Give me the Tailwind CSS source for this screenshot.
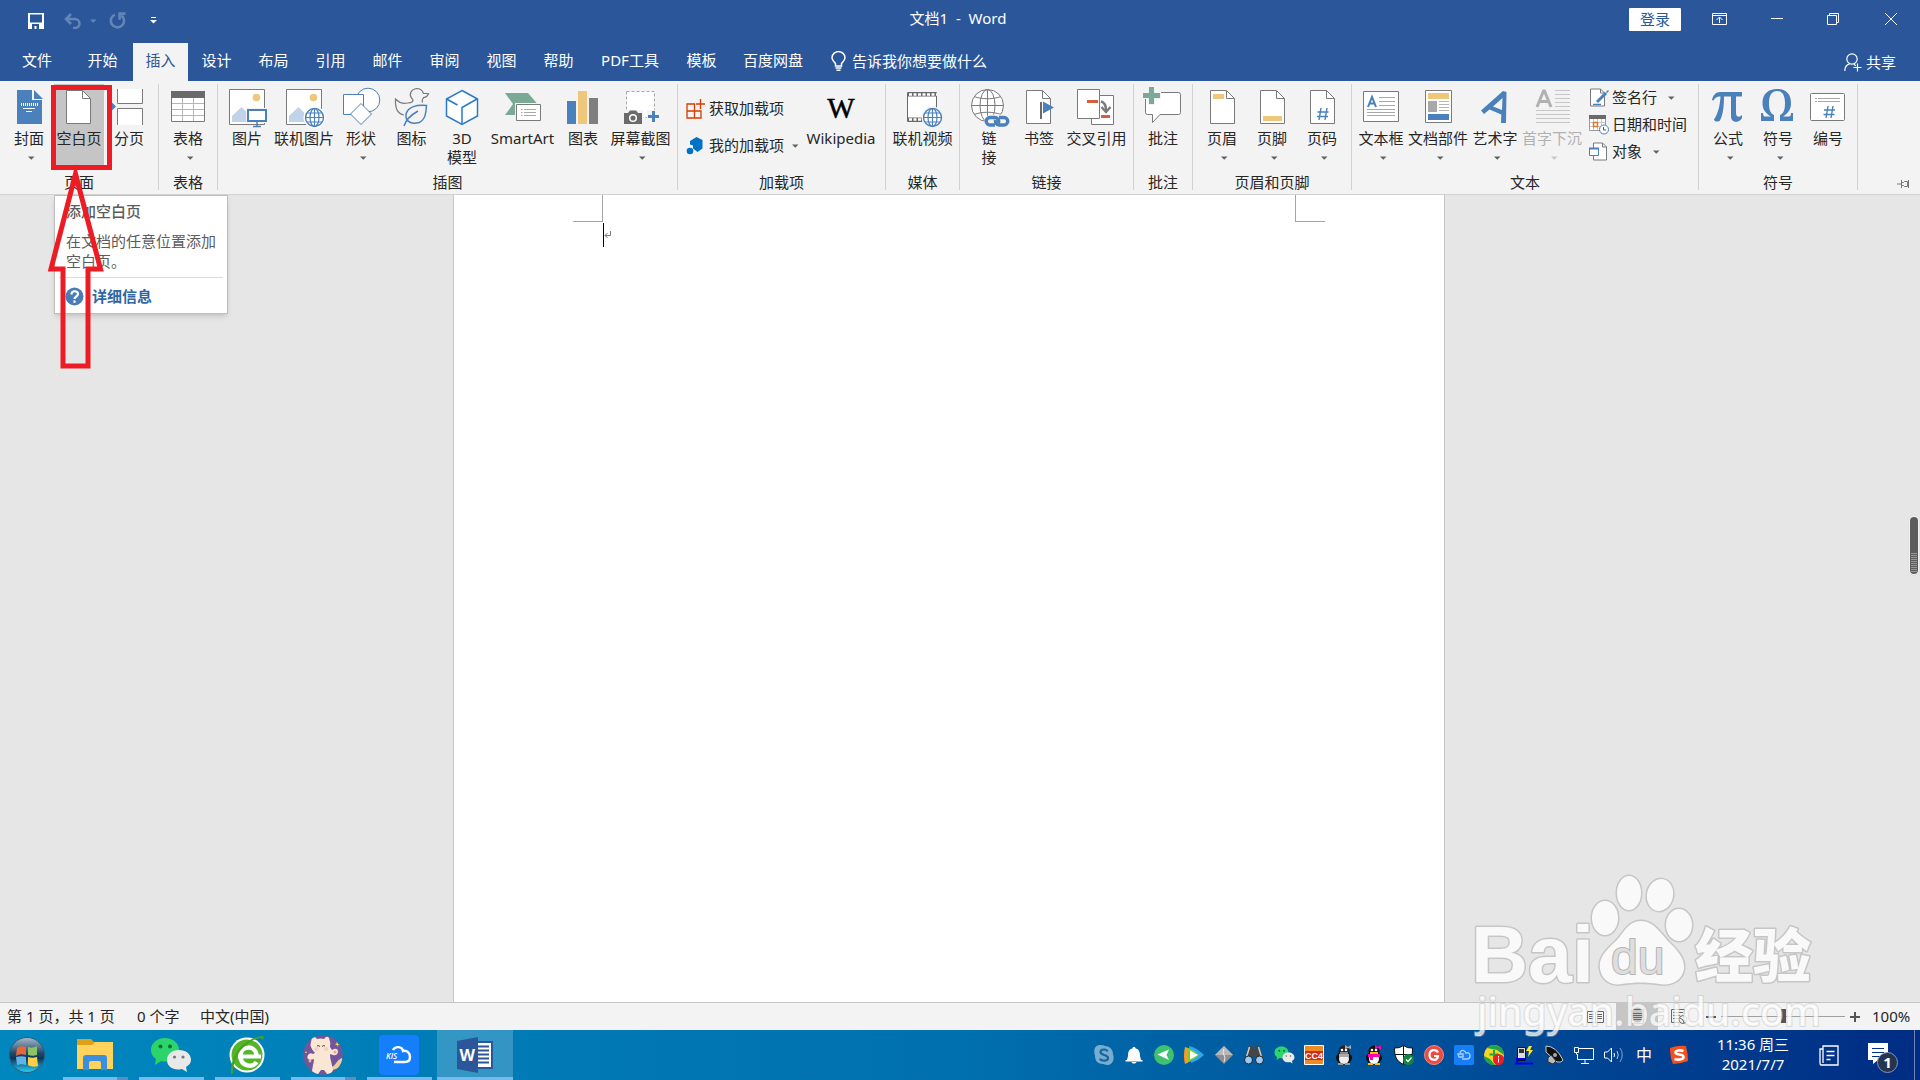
<!DOCTYPE html>
<html lang="zh-CN">
<head>
  <meta charset="UTF-8">
  <meta name="viewport" content="width=device-width, initial-scale=1.0">
  <title>文档1 - Word</title>
  <script src="https://cdn.jsdelivr.net/npm/@tailwindcss/browser@4"></script>
</head>
<body class="relative flex flex-col h-screen overflow-hidden bg-[#e6e6e6] text-[#262626] text-[15px] leading-[19px] font-['Noto_Sans','Noto_Sans_CJK_SC',sans-serif]">

  <!-- Símbolos reutilizados -->
  <svg width="0" height="0" class="absolute" aria-hidden="true">
    <symbol id="doc" viewBox="0 0 50 42">
      <path d="M13.500 4.500h16l8 8v25h-24z" fill="#fff" stroke="#7a7a7a"/>
      <path d="M29.500 4.500v8h8" fill="none" stroke="#7a7a7a"/>
    </symbol>
    <symbol id="globe" viewBox="0 0 20 20">
      <circle cx="10" cy="10" r="9" fill="#fff" stroke="#4a80bb" stroke-width="1.400"/>
      <path d="M10 1v18M1 10h18M2.500 5.500h15M2.500 14.500h15" stroke="#4a80bb" stroke-width="1.200"/>
      <ellipse cx="10" cy="10" rx="4.500" ry="9" fill="none" stroke="#4a80bb" stroke-width="1.200"/>
    </symbol>
    <symbol id="caret" viewBox="0 0 7 4"><path d="M0 .5h6.500L3.250 3.800z" fill="currentColor"/></symbol>
    <symbol id="wechat" viewBox="0 0 42 36">
      <path d="M15 1C7 1 1 6 1 13c0 4 2 7 5 9l-1 6 6-4c9 2 18-2 18-11C29 6 23 1 15 1z" fill="#2bd56a"/>
      <circle cx="10.500" cy="9.500" r="2" fill="#116b3a"/><circle cx="20" cy="9.500" r="2" fill="#116b3a"/>
      <path d="M29 13c-7 0-12 4-12 10 0 7 7 11 15 9l5 3-1-5c3-2 5-4 5-7 0-6-5-10-12-10z" fill="#e9e9e9"/>
      <circle cx="24.500" cy="20" r="1.600" fill="#777"/><circle cx="33" cy="20" r="1.600" fill="#777"/>
    </symbol>
  </svg>

  <!-- Barra de título -->
  <header class="bg-[#2b579a] text-white shrink-0">
    <div class="h-[43px] grid grid-cols-[1fr_auto_1fr]">
      <div class="flex items-center pl-7 pb-0.5">
        <button aria-label="保存">
          <svg width="16" height="16" viewBox="0 0 16 16"><path d="M0 0h16v16H0z" fill="#fff"/><path d="M2 1.500h12v8H2zM4 11h7v5H8.500v-3H6.500v3H4z" fill="#2b579a"/></svg>
        </button>
        <button aria-label="撤消" class="ml-5 flex items-center gap-2 text-[#6485b7]">
          <svg width="18" height="16" viewBox="0 0 18 16" fill="none" stroke="currentColor" stroke-width="2.600"><path d="M7 1L2 6l5 5M2.500 6H11a4.500 4.500 0 0 1 0 9H9"/></svg>
          <svg width="7" height="4"><use href="#caret"/></svg>
        </button>
        <button aria-label="恢复" class="ml-3">
          <svg width="17" height="17" viewBox="0 0 17 17" fill="none" stroke="#6485b7" stroke-width="2.600"><path d="M6 2.600A6.600 6.600 0 1 0 12.500 3.500"/><path d="M16.500 1.600H10.600v6.200"/></svg>
        </button>
        <button aria-label="自定义快速访问工具栏" class="ml-6">
          <svg width="7" height="7" viewBox="0 0 7 7"><path d="M1 .5h5" stroke="#fff"/><path d="M0 3h7L3.500 6.500z" fill="#fff"/></svg>
        </button>
      </div>
      <h1 class="pt-[9px] pr-1 whitespace-pre">文档1  -  Word</h1>
      <div class="flex justify-end items-start">
        <button class="mt-2 w-[52px] h-[23px] bg-white text-[#2b579a] rounded-[1px]">登录</button>
        <button aria-label="功能区显示选项" class="w-[76px] h-[38px] flex justify-center items-center"><svg width="15" height="12" viewBox="0 0 15 12" fill="none" stroke="#fff"><path d="M.5.5h14v11H.5zM.5 2.500h14M7.500 10V4.500M4.500 7l3-3 3 3"/></svg></button>
        <button aria-label="最小化" class="w-10 h-[38px] flex justify-center items-center"><svg width="12" height="2"><path d="M0 .5h12" stroke="#fff"/></svg></button>
        <button aria-label="向下还原" class="w-[72px] h-[38px] flex justify-center items-center"><svg width="12" height="12" viewBox="0 0 12 12" fill="none" stroke="#fff"><path d="M.5 2.500h9v9h-9zM2.500 2.500v-2h9v9h-2"/></svg></button>
        <button aria-label="关闭" class="w-[51px] h-[38px] flex pl-4 items-center"><svg width="12" height="12" viewBox="0 0 12 12" stroke="#fff"><path d="M0 0l12 12M12 0L0 12"/></svg></button>
      </div>
    </div>
    <nav class="h-[38px] flex items-stretch">
      <button class="w-[74px] pb-1">文件</button>
      <button class="w-[57px] pb-1">开始</button>
      <button class="w-[55px] ml-0.5 pb-1 bg-[#f3f3f3] text-[#2b579a]">插入</button>
      <button class="w-[57px] pb-1">设计</button>
      <button class="w-[57px] pb-1">布局</button>
      <button class="w-[57px] pb-1">引用</button>
      <button class="w-[57px] pb-1">邮件</button>
      <button class="w-[57px] pb-1">审阅</button>
      <button class="w-[57px] pb-1">视图</button>
      <button class="w-[57px] pb-1">帮助</button>
      <button class="w-[86px] pb-1">PDF工具</button>
      <button class="w-[57px] pb-1">模板</button>
      <button class="w-[86px] pb-1">百度网盘</button>
      <label for="tellMe" class="flex items-center pl-[15px] pb-0.5" aria-label="告诉我你想要做什么">
        <svg width="15" height="20" viewBox="0 0 15 20" fill="none" stroke="#fff" stroke-width="1.500"><path d="M4.500 15v-2.500C3 11 1 9.500 1 6.800a6.500 6.200 0 0 1 13 0c0 2.700-2 4.200-3.500 5.700V15zM4.500 17h6M5.500 19.200h4"/></svg>
      </label>
      <input id="tellMe" type="text" placeholder="告诉我你想要做什么" class="w-40 ml-1.5 pb-0.5 bg-transparent outline-none placeholder:text-white">
      <button class="ml-auto mr-6 flex items-center gap-1">
        <svg width="18" height="19" viewBox="0 0 18 19" fill="none" stroke="#fff" stroke-width="1.200"><circle cx="8" cy="6" r="5.200"/><path d="M.8 18c0-4 2-6.500 5-7.200M9.800 11.200l2 1.500M13.500 10.500v8M9.500 14.500h8"/></svg>
        共享
      </button>
    </nav>
  </header>

  <!-- Faixa de opções -->
  <section class="relative h-[114px] shrink-0 bg-[#f3f3f3] border-b border-[#d2d2d2] flex items-start pt-[3px] text-center">
    <div class="h-[106px] px-1 border-r border-[#d2d2d2] flex flex-col justify-between">
      <div class="flex">
        <button class="w-[50px] h-[82px] flex flex-col items-center">
          <svg width="50" height="45" viewBox="0 -2 50 45" class="shrink-0"><path d="M13 4h15v10h10v24H13z" fill="#4a80bb"/><path d="M30 4l9 9h-9z" fill="#4a80bb"/><path d="M17 18.500h17" stroke="#fff" stroke-width="3" stroke-dasharray="1 1"/><path d="M19 22.500h12M22 25.500h6" stroke="#fff"/></svg>
          封面
          <svg width="7" height="4" class="mt-2 ml-1 text-[#606060]"><use href="#caret"/></svg>
        </button>
        <button class="w-[50px] h-[82px] flex flex-col items-center bg-[#c5c5c5]">
          <svg width="50" height="45" viewBox="1 -2 50 45" class="shrink-0"><use href="#doc" width="50" height="42"/></svg>
          空白页
        </button>
        <button class="w-[50px] h-[82px] flex flex-col items-center">
          <svg width="50" height="45" viewBox="0 -2 50 45" class="shrink-0"><path d="M13.500 3v14.500h25V3M13.500 39V22.500h25V39" fill="#fff" stroke="#7a7a7a"/><path d="M4 18.500h4v-2l4 4-4 4v-2H4z" fill="#4a80bb"/></svg>
          分页
        </button>
      </div>
      <p class="-mb-0.5">页面</p>
    </div>

    <div class="h-[106px] px-1 border-r border-[#d2d2d2] flex flex-col justify-between">
      <button class="w-[50px] h-[82px] flex flex-col items-center">
        <svg width="50" height="45" viewBox="0 -2 50 45" class="shrink-0"><path d="M8.500 5.500h33v30h-33z" fill="#fff" stroke="#7a7a7a"/><path d="M8 5h34v7H8z" fill="#6a6a6a"/><path d="M19.500 12v23M30.500 12v23M9 17.500h32M9 23.500h32M9 29.500h32" stroke="#b5b5b5"/></svg>
        表格
        <svg width="7" height="4" class="mt-2 ml-1 text-[#606060]"><use href="#caret"/></svg>
      </button>
      <p class="-mb-0.5">表格</p>
    </div>

    <div class="h-[106px] px-1 border-r border-[#d2d2d2] flex flex-col justify-between">
      <div class="flex">
        <button class="w-[50px] h-[82px] flex flex-col items-center">
          <svg width="50" height="45" viewBox="0 -2 50 45" class="shrink-0"><path d="M7.500 3.500h35v35h-35z" fill="#fff" stroke="#7a7a7a"/><circle cx="34.500" cy="11.500" r="3.800" fill="#eec77c"/><path d="M10 36v-6l9.500-9 5 5v10z" fill="#c1d3e8"/><path d="M24 22h22v15H24z" fill="#f3f3f3"/><path d="M26 24h18v11H26z" fill="#fff" stroke="#4a80bb" stroke-width="2"/><path d="M31 40.500h8M35 36v4" stroke="#4a80bb" stroke-width="1.500"/></svg>
          图片
        </button>
        <button class="w-16 h-[82px] flex flex-col items-center">
          <svg width="64" height="45" viewBox="0 -2 64 45" class="shrink-0"><path d="M14.500 3.500h35v35h-35z" fill="#fff" stroke="#7a7a7a"/><circle cx="41.500" cy="11.500" r="3.800" fill="#eec77c"/><path d="M17 36v-6l9.500-9 8 8v7z" fill="#c1d3e8"/><circle cx="42.500" cy="31.500" r="11" fill="#fff"/><use href="#globe" x="32.500" y="21.500" width="20" height="20"/></svg>
          联机图片
        </button>
        <button class="w-[50px] h-[82px] flex flex-col items-center">
          <svg width="50" height="45" viewBox="0 -2 50 45" class="shrink-0" fill="#fff" stroke="#4a80bb"><circle cx="32" cy="14" r="11.800"/><path d="M7.500 8.500h20v20h-20z"/><path d="M25 17.500L35.500 28 25 38.500 14.500 28z"/></svg>
          形状
          <svg width="7" height="4" class="mt-2 ml-1 text-[#606060]"><use href="#caret"/></svg>
        </button>
        <button class="w-[51px] h-[82px] flex flex-col items-center">
          <svg width="50" height="45" viewBox="0 -2 50 45" class="shrink-0" fill="none"><path d="M17 29C11 28 8 22 8.500 13c4 4 8 5 12 4 5 0 7-2 4-5-3-4 0-9 5-9.500 4 0 6 2 7 5h5c-1 3-3 4-5 4-1 2-2 3-1 5M16 29" stroke="#7a7a7a" stroke-width="1.200"/><path d="M39.500 19.500c-9-1-19 1-20.500 9-1 8 7 10 13 8 7-3 7-11 7.500-17zM17 40c2-7 7-11 14-15" stroke="#4a80bb" stroke-width="1.500" fill="#f3f3f3"/></svg>
          图标
        </button>
        <button class="w-[50px] h-[82px] flex flex-col items-center">
          <svg width="50" height="45" viewBox="0 -2 50 45" class="shrink-0" fill="#fff" stroke="#2a7ac8" stroke-width="1.500"><path d="M25 4.500l15.500 8.500v17L25 38.500 9.500 30V13z"/><path d="M25 38V21.500L40 13M9.500 13l11 6"/></svg>
          3D<br>模型
        </button>
        <button class="w-[71px] h-[82px] flex flex-col items-center">
          <svg width="72" height="45" viewBox="0 -2 72 45" class="shrink-0"><path d="M18 7h23l9.500 11L41 29H18l8-11z" fill="#7aa996"/><path d="M28 17h27v20H28z" fill="#f3f3f3"/><path d="M29.500 18.500h24v16h-24z" fill="#fff" stroke="#7a7a7a"/><path d="M34 23.500h1.500M37 23.500h12M34 26.500h1.500M37 26.500h12M34 29.500h1.500M37 29.500h12" stroke="#a8a8a8"/></svg>
          SmartArt
        </button>
        <button class="w-[50px] h-[82px] flex flex-col items-center">
          <svg width="50" height="45" viewBox="0 -2 50 45" class="shrink-0"><path d="M9 15h9v23H9z" fill="#4a80bb"/><path d="M20 5h9v33h-9z" fill="#eec77c"/><path d="M31 12h9v26h-9z" fill="#7f7f7f"/></svg>
          图表
        </button>
        <button class="w-[65px] h-[82px] flex flex-col items-center">
          <svg width="64" height="45" viewBox="0 -2 64 45" class="shrink-0"><path d="M17.500 5.500h28v26h-28z" fill="#fff" stroke="#a8a8a8" stroke-dasharray="3 2"/><path d="M14 24h20v15H14zM38 24h14v14H38z" fill="#f3f3f3"/><path d="M15 27h4l2-2.500h6l2 2.500h4v11H15z" fill="#6a6a6a"/><circle cx="24" cy="32" r="3.300" fill="none" stroke="#fff" stroke-width="1.500"/><path d="M44.500 25v11M39 30.500h11" stroke="#4a80bb" stroke-width="3"/></svg>
          屏幕截图
          <svg width="7" height="4" class="mt-2 ml-1 text-[#606060]"><use href="#caret"/></svg>
        </button>
      </div>
      <p class="-mb-0.5">插图</p>
    </div>

    <div class="h-[106px] px-1 border-r border-[#d2d2d2] flex flex-col justify-between">
      <div class="flex">
        <div class="w-[119px] pl-1 pt-1.5 flex flex-col">
          <button class="h-[37px] flex items-center gap-1 whitespace-nowrap">
            <svg width="19" height="20" viewBox="0 0 19 20" fill="none" stroke="#d83b01" stroke-width="1.300" class="shrink-0"><path d="M1 5h7.500v14H1zM1 12h14v7H1M8.500 12h6.500M14.500 0v10M10 5h9M1 5h7"/></svg>
            获取加载项
          </button>
          <button class="h-[37px] flex items-center gap-1 whitespace-nowrap">
            <svg width="19" height="18" viewBox="0 0 19 18" fill="#0072c6" class="shrink-0"><path d="M10.500 0l6 3v8.500l-5 3.500-4.500-3.500v-3l-3-1V4z"/><circle cx="4" cy="14" r="3.300"/></svg>
            我的加载项
            <svg width="7" height="4" class="ml-1 shrink-0 text-[#606060]"><use href="#caret"/></svg>
          </button>
        </div>
        <button class="w-20 h-[82px] flex flex-col items-center">
          <span class="h-[45px] pt-[6px] text-[29px] leading-9 text-black [-webkit-text-stroke:0.5px_#000] font-['Liberation_Serif',serif]">W</span>
          Wikipedia
        </button>
      </div>
      <p class="-mb-0.5">加载项</p>
    </div>

    <div class="h-[106px] px-1 border-r border-[#d2d2d2] flex flex-col justify-between">
      <button class="w-[65px] h-[82px] flex flex-col items-center">
        <svg width="65" height="45" viewBox="0 -2 65 45" class="shrink-0"><path d="M17.500 6.500h29v29h-29z" fill="#fff" stroke="#6a6a6a"/><path d="M18 8.500h28M18 33.500h14" stroke="#6a6a6a" stroke-width="4"/><path d="M19 8.500h28M19 33.500h13" stroke="#fff" stroke-width="2.400" stroke-dasharray="3 1.500"/><circle cx="42.500" cy="31.500" r="11" fill="#f3f3f3"/><use href="#globe" x="32.500" y="21.500" width="20" height="20"/></svg>
        联机视频
      </button>
      <p class="-mb-0.5">媒体</p>
    </div>

    <div class="h-[106px] px-1 border-r border-[#d2d2d2] flex flex-col justify-between">
      <div class="flex">
        <button class="w-[50px] h-[82px] flex flex-col items-center">
          <svg width="50" height="45" viewBox="0 -2 50 45" class="shrink-0" fill="none"><circle cx="23.500" cy="19.500" r="16" fill="#fff" stroke="#7a7a7a"/><ellipse cx="23.500" cy="19.500" rx="7.500" ry="16" stroke="#7a7a7a"/><path d="M23.500 3.500v32M7.500 19.500h32M10 10.500c8 3 19 3 27 0M10 28.500c8-3 19-3 27 0" stroke="#7a7a7a"/><g stroke="#f3f3f3" stroke-width="7"><rect x="24" y="32" width="11" height="7" rx="3.500"/><rect x="31" y="32" width="12" height="7" rx="3.500"/></g><g stroke="#4a80bb" stroke-width="3.400"><path d="M31 39h-5a3.500 3.500 0 0 1 0-7.500h5a4 4 0 0 1 3.500 5.500M35 31.500h5a3.500 3.500 0 0 1 0 7.500h-5a4 4 0 0 1-3.500-5"/></g></svg>
          链<br>接
        </button>
        <button class="w-[50px] h-[82px] flex flex-col items-center">
          <svg width="50" height="45" viewBox="1 -2 50 45" class="shrink-0"><use href="#doc" width="50" height="42"/><path d="M28 16v17" stroke="#6a6a6a" stroke-width="2"/><path d="M30 15.500l11 6-11 6z" fill="#4a80bb"/></svg>
          书签
        </button>
        <button class="w-[65px] h-[82px] flex flex-col items-center">
          <svg width="65" height="45" viewBox="0 -2 65 45" class="shrink-0"><path d="M27.500 9.500h22v29h-22z" fill="#fff" stroke="#7a7a7a"/><path d="M13.500 3.500h22v29h-22z" fill="#fff" stroke="#7a7a7a"/><path d="M23 15.500h11M37 30.500h9" stroke="#d65d3e" stroke-width="3"/><path d="M37 15.500c4 1 5 4 5 9M37.500 21l4.500 5 4.500-5" fill="none" stroke="#7a7a7a" stroke-width="2.400"/></svg>
          交叉引用
        </button>
      </div>
      <p class="-mb-0.5">链接</p>
    </div>

    <div class="h-[106px] px-1 border-r border-[#d2d2d2] flex flex-col justify-between">
      <button class="w-[50px] h-[82px] flex flex-col items-center">
        <svg width="50" height="45" viewBox="0 -2 50 45" class="shrink-0"><path d="M9.500 6.500h31q2 0 2 2v18q0 2-2 2H22l-7.500 8v-8h-5q-2 0-2-2v-18q0-2 2-2z" fill="#fff" stroke="#7a7a7a"/><path d="M13.500 0v19M4 9.500h19" stroke="#f3f3f3" stroke-width="7"/><path d="M13.500 1v17M5 9.500h17" stroke="#7aa996" stroke-width="5"/></svg>
        批注
      </button>
      <p class="-mb-0.5">批注</p>
    </div>

    <div class="h-[106px] px-1 border-r border-[#d2d2d2] flex flex-col justify-between">
      <div class="flex">
        <button class="w-[50px] h-[82px] flex flex-col items-center">
          <svg width="50" height="45" viewBox="0 -2 50 45" class="shrink-0"><use href="#doc" width="50" height="42"/><path d="M16 8h11v5H16z" fill="#eec77c"/></svg>
          页眉
          <svg width="7" height="4" class="mt-2 ml-1 text-[#606060]"><use href="#caret"/></svg>
        </button>
        <button class="w-[50px] h-[82px] flex flex-col items-center">
          <svg width="50" height="45" viewBox="0 -2 50 45" class="shrink-0"><use href="#doc" width="50" height="42"/><path d="M16 30h19v5H16z" fill="#eec77c"/></svg>
          页脚
          <svg width="7" height="4" class="mt-2 ml-1 text-[#606060]"><use href="#caret"/></svg>
        </button>
        <button class="w-[50px] h-[82px] flex flex-col items-center">
          <svg width="50" height="45" viewBox="0 -2 50 45" class="shrink-0"><use href="#doc" width="50" height="42"/><path d="M24 22l-2 12M30 22l-2 12M20.500 26h11M20 30.500h11" stroke="#4a80bb" stroke-width="1.400"/></svg>
          页码
          <svg width="7" height="4" class="mt-2 ml-1 text-[#606060]"><use href="#caret"/></svg>
        </button>
      </div>
      <p class="-mb-0.5">页眉和页脚</p>
    </div>

    <div class="h-[106px] px-1 border-r border-[#d2d2d2] flex flex-col justify-between">
      <div class="flex">
        <button class="w-[50px] h-[82px] flex flex-col items-center whitespace-nowrap">
          <svg width="50" height="45" viewBox="0 -2 50 45" class="shrink-0"><path d="M7.500 5.500h35v30h-35z" fill="#fff" stroke="#7a7a7a"/><path d="M12 21l4-10 4 10M13.500 17.500h5" fill="none" stroke="#4a80bb" stroke-width="2"/><path d="M23 11.500h16M23 15.500h16M23 19.500h16M11 23.500h28M11 26.500h28M11 29.500h28" stroke="#a8a8a8"/></svg>
          文本框
          <svg width="7" height="4" class="mt-2 ml-1 text-[#606060]"><use href="#caret"/></svg>
        </button>
        <button class="w-16 h-[82px] flex flex-col items-center whitespace-nowrap">
          <svg width="64" height="45" viewBox="0 -2 64 45" class="shrink-0"><path d="M19.500 4.500h26v32h-26z" fill="#fff" stroke="#7a7a7a"/><path d="M22 7h21v6H22z" fill="#eec77c"/><path d="M22 15h9v11h-9z" fill="#a8a8a8"/><path d="M33 15.500h10M33 18.500h10M33 21.500h10M33 24.500h10" stroke="#b5b5b5"/><path d="M22 28h21v6H22z" fill="#4a80bb"/></svg>
          文档部件
          <svg width="7" height="4" class="mt-2 ml-1 text-[#606060]"><use href="#caret"/></svg>
        </button>
        <button class="w-[50px] h-[82px] flex flex-col items-center whitespace-nowrap">
          <svg width="50" height="45" viewBox="0 -2 50 45" class="shrink-0"><path d="M11 24.500L33 5l3.500 1L36 37h-5l.300-8.500L19.500 23.500 14 28zM23 20.500l9 3.500.500-12z" fill="#4a80bb"/></svg>
          艺术字
          <svg width="7" height="4" class="mt-2 ml-1 text-[#606060]"><use href="#caret"/></svg>
        </button>
        <button class="w-16 h-[82px] flex flex-col items-center whitespace-nowrap text-[#b1b1b1]" disabled>
          <svg width="64" height="45" viewBox="0 -2 64 45" class="shrink-0"><path d="M17 21l6.500-16h1L31 21M19.500 15.500h9" fill="none" stroke="#b1b1b1" stroke-width="3"/><path d="M35 4.500h15M35 8.500h15M35 12.500h15M35 16.500h15M35 20.500h15M16 24.500h34M16 28.500h34M16 32.500h34M16 36.500h34" stroke="#c6c6c6"/></svg>
          首字下沉
          <svg width="7" height="4" class="mt-2 ml-1 text-[#c6c6c6]"><use href="#caret"/></svg>
        </button>
        <div class="w-[110px] pl-[5px] flex flex-col">
          <button class="h-[27px] flex items-center gap-[3px] whitespace-nowrap">
            <svg width="20" height="19" viewBox="0 0 20 19" class="shrink-0"><path d="M1.500 1h10l4 4v13h-14z" fill="#fff" stroke="#7a7a7a"/><path d="M11.500 1v4h4" fill="none" stroke="#7a7a7a"/><path d="M8 14L17 5" stroke="#4a80bb" stroke-width="3"/><path d="M17.500 4.500L19.500 2.500M4 16.500h8" stroke="#4a80bb" stroke-width="1.500"/></svg>
            签名行
            <svg width="7" height="4" class="ml-2 shrink-0 text-[#606060]"><use href="#caret"/></svg>
          </button>
          <button class="h-[27px] flex items-center gap-[3px] whitespace-nowrap">
            <svg width="20" height="20" viewBox="0 0 20 20" class="shrink-0"><path d="M.5.500h16v15H.5z" fill="#fff" stroke="#9a9a9a"/><path d="M0 0h17v4H0z" fill="#6a6a6a"/><path d="M4.500 4v11M8.500 4v11M12.500 4v11M1 7.500h15M1 11.500h15" stroke="#c6c6c6"/><path d="M4.500 7.500h4v4h-4z" fill="#fff" stroke="#e07a28" stroke-width="1.500"/><circle cx="15" cy="14.500" r="4.500" fill="#fff" stroke="#4a80bb"/><path d="M14.500 12v3h2.500" fill="none" stroke="#555"/></svg>
            日期和时间
          </button>
          <button class="h-[27px] flex items-center gap-[3px] whitespace-nowrap">
            <svg width="20" height="19" viewBox="0 0 20 19" class="shrink-0"><path d="M4.500 1h9l4 4v13h-13z" fill="#fff" stroke="#7a7a7a"/><path d="M13.500 1v4h4" fill="none" stroke="#7a7a7a"/><path d="M.5 6.500h9v7h-9z" fill="#fff" stroke="#4a80bb"/><path d="M0 6.500h10" stroke="#4a80bb" stroke-width="2"/></svg>
            对象
            <svg width="7" height="4" class="ml-2 shrink-0 text-[#606060]"><use href="#caret"/></svg>
          </button>
        </div>
      </div>
      <p class="-mb-0.5">文本</p>
    </div>

    <div class="h-[106px] px-1 border-r border-[#d2d2d2] flex flex-col justify-between">
      <div class="flex">
        <button class="w-[50px] h-[82px] flex flex-col items-center">
          <svg width="50" height="45" viewBox="0 -2 50 45" class="shrink-0"><path d="M9 14c1-5 4-8 8-8h22v4.500h-6V27c0 4 3 5 6 2v3c-2 5-11 6-11-2V10.500h-7c0 10-1 18-4 24-2 2-6 1-6-1 4-6 6-14 6.500-23-4 0-5 1-7 4z" fill="#4a80bb"/></svg>
          公式
          <svg width="7" height="4" class="mt-2 ml-1 text-[#606060]"><use href="#caret"/></svg>
        </button>
        <button class="w-[50px] h-[82px] flex flex-col items-center">
          <svg width="50" height="45" viewBox="0 -2 50 45" class="shrink-0"><path d="M8 27h2c0 3 1 3.500 3 3.500h5C12 27 9.500 23 9.500 17 9.500 8 15 3 24 3s14 5 14 14c0 6-2.500 10-8 13.500h5c2 0 3-.5 3-3.500h2v8H27v-6c4-2 5-6 5-12 0-8-3-12-8-12s-8 4-8 12c0 6 1 10 5 12v6H8z" fill="#4a80bb"/></svg>
          符号
          <svg width="7" height="4" class="mt-2 ml-1 text-[#606060]"><use href="#caret"/></svg>
        </button>
        <button class="w-[50px] h-[82px] flex flex-col items-center">
          <svg width="50" height="45" viewBox="0 -2 50 45" class="shrink-0"><rect x="7.500" y="7.500" width="34" height="27" rx="1" fill="#fff" stroke="#7a7a7a"/><path d="M12 12.500h2M15 12.500h22M12 15.500h2M15 15.500h22" stroke="#a8a8a8"/><path d="M25 20l-2 12M30 20l-2 12M21 24h11M20.500 28.500h11" stroke="#4a80bb" stroke-width="1.400"/></svg>
          编号
        </button>
      </div>
      <p class="-mb-0.5">符号</p>
    </div>

    <button aria-label="折叠功能区" class="ml-auto mr-2.5 self-end mb-1.5">
      <svg width="13" height="8" viewBox="0 0 13 8" fill="none" stroke="#777"><path d="M0 4h4M4.500 0v8M4.500 2.500h2l1-1h3v5h-3l-1-1h-2M11.500 0v8"/></svg>
    </button>

    <!-- Dica do botão de página em branco -->
    <div class="absolute left-[54px] top-[114px] z-10 w-[174px] h-[119px] bg-white border border-[#bebebe] shadow-md text-left text-[#5c5c5c]">
      <p class="pl-[11px] pt-1.5 font-medium">添加空白页</p>
      <p class="pl-[11px] pt-2.5 leading-5 whitespace-nowrap">在文档的任意位置添加<br>空白页。</p>
      <a href="#" class="mx-1 mt-1.5 pl-1.5 pt-[9px] border-t border-[#dcdcdc] flex items-center gap-2 font-bold text-[#2f66a3]">
        <svg width="19" height="19" viewBox="0 0 19 19"><circle cx="9.500" cy="9.500" r="9" fill="#4a7db8"/><path d="M6.500 7.500c0-4.500 6.500-4 6.500-.500 0 2.500-3.500 2.500-3.500 5M9.500 13.500v2.300" fill="none" stroke="#fff" stroke-width="2.200"/></svg>
        详细信息
      </a>
    </div>
  </section>

  <!-- Documento -->
  <main class="relative flex-1 min-h-0 flex justify-center pr-[22px]">
    <article class="w-[992px] bg-white border-x border-[#c6c6c6]">
      <div class="flex justify-between px-[119px]">
        <div class="w-[30px] h-[27px] border-r border-b border-[#a5a5a5]"></div>
        <div class="w-[30px] h-[27px] border-l border-b border-[#a5a5a5]"></div>
      </div>
      <div class="flex items-center pl-[149px] pt-px">
        <span class="w-px h-6 bg-black"></span>
        <svg width="8" height="8" viewBox="0 0 8 8" fill="none" stroke="#777"><path d="M6.500 0v4.500H1M3.500 2L1 4.500 3.500 7"/></svg>
      </div>
    </article>
    <div class="absolute right-0.5 top-[322px] w-2 h-[57px] rounded-full bg-[#5c5c5c] ring-1 ring-[#f3f3f3] shadow">
      <svg width="8" height="57" viewBox="0 0 8 57"><path d="M4 36v19" stroke="#4fc27c" stroke-width="6" stroke-dasharray="1 1"/></svg>
    </div>
  </main>

  <!-- Barra de status -->
  <footer class="h-7 shrink-0 bg-[#f3f3f3] border-t border-[#c6c6c6] flex items-center pl-[7px] pr-2">
    <span class="w-[130px] pb-px">第 1 页，共 1 页</span>
    <span class="w-[63px] pb-px">0 个字</span>
    <span class="pb-px">中文(中国)</span>
    <button aria-label="阅读视图" class="ml-auto w-[42px] h-full flex items-center justify-center"><svg width="17" height="14" viewBox="0 0 17 14" fill="none" stroke="#666"><path d="M.5 1.500h7l1 1 1-1h7v11h-7l-1 1-1-1h-7zM8.500 2v11M2 4.500h5M2 6.500h5M2 8.500h5M10 4.500h5M10 6.500h5M10 8.500h5"/></svg></button>
    <button aria-label="页面视图" class="w-[42px] h-full bg-[#c6c6c6] flex items-center justify-center"><svg width="13" height="15" viewBox="0 0 13 15" fill="none" stroke="#666"><path d="M.5.500h12v14H.5zM2 4.500h9M2 6.500h9M2 8.500h9M2 10.500h9"/></svg></button>
    <button aria-label="Web 版式视图" class="w-[42px] h-full flex items-center justify-center"><svg width="17" height="15" viewBox="0 0 17 15" fill="none" stroke="#666"><path d="M8 13.500H.5V.500h13v5M2 3.500h10M2 6.500h7M2 9.500h6"/><circle cx="12" cy="10.500" r="4"/><path d="M9 9l3 2 1 3"/></svg></button>
    <button aria-label="缩小" class="ml-1.5 text-[#555]"><svg width="10" height="10"><path d="M0 5h10" stroke="currentColor" stroke-width="2"/></svg></button>
    <input type="range" min="10" max="190" value="100" aria-label="显示比例" class="ml-[5px] mr-[5px] w-[124px] h-4 appearance-none bg-transparent [&::-webkit-slider-runnable-track]:h-px [&::-webkit-slider-runnable-track]:bg-[#a0a0a0] [&::-webkit-slider-thumb]:appearance-none [&::-webkit-slider-thumb]:w-[5px] [&::-webkit-slider-thumb]:h-3.5 [&::-webkit-slider-thumb]:-mt-[7px] [&::-webkit-slider-thumb]:bg-[#555]">
    <button aria-label="放大" class="text-[#555]"><svg width="10" height="10"><path d="M0 5h10M5 0v10" stroke="currentColor" stroke-width="2"/></svg></button>
    <span class="ml-3 w-10 pb-px whitespace-nowrap">100%</span>
  </footer>

  <!-- Barra de tarefas -->
  <div class="h-[50px] shrink-0 flex items-stretch text-white bg-linear-to-r from-[#0087bd] via-[#0070ae] via-50% to-[#002c84]">
    <button aria-label="开始" class="w-[57px] flex items-center pl-2">
      <svg width="38" height="38" viewBox="0 0 38 38"><defs><linearGradient id="orb" x2="0" y2="1"><stop stop-color="#a9bccb"/><stop offset=".45" stop-color="#20476a"/><stop offset=".6" stop-color="#0b3658"/><stop offset="1" stop-color="#2ad3fb"/></linearGradient></defs><circle cx="19" cy="19" r="17.500" fill="url(#orb)" stroke="#2c5b7c"/><path d="M9 12c3-2 6-2 9-1v8c-4-1-7-1-10 1z" fill="#e8653a"/><path d="M20 11c3 1 6 1 9-1v9c-3 1-6 1-9 0z" fill="#8dc265"/><path d="M8 21c4-1 7-1 10 0v8c-3-1-6-1-9 0z" fill="#5fb3ea"/><path d="M20 21c3 1 6 1 9 0l1 9c-3 1-7 1-10-1z" fill="#fccf45"/></svg>
    </button>
    <button aria-label="文件资源管理器" class="w-[76px] flex flex-col items-center justify-between pt-[9px]">
      <svg width="36" height="32" viewBox="0 0 36 32"><path d="M0 0h14l3 3h19v27H0z" fill="#e0a016"/><path d="M0 6h15l3-3h18v27H0z" fill="#ffd35c"/><path d="M6 31V19q0-3 3-3h18q3 0 3 3v12h-6v-7q0-2-2-2h-8q-2 0-2 2v7z" fill="#3b8fdc"/></svg>
      <span class="w-[65px] h-[3px] bg-[#76b9ed] border-r-[11px] border-[#5a8fc0]"></span>
    </button>
    <button aria-label="微信" class="w-[76px] flex flex-col items-center justify-between pt-[7px]">
      <svg width="42" height="36"><use href="#wechat"/></svg>
      <span class="w-[65px] h-[3px] bg-[#76b9ed]"></span>
    </button>
    <button aria-label="360浏览器" class="w-[76px] flex flex-col items-center justify-between pt-1.5">
      <svg width="38" height="38" viewBox="0 0 38 38"><circle cx="19" cy="19" r="17.500" fill="#fff"/><circle cx="19" cy="19" r="15.500" fill="#54b528"/><path d="M10 20.500h23" stroke="#fff" stroke-width="4"/><path d="M28.500 26c-3 6-16 5-16-6 0-11 15-11 16-1" fill="none" stroke="#fff" stroke-width="4.500"/><path d="M3 38C2 20 14 3 34 0c2 0 2 2 1 4-1-3-6-2-11 1C11 12 5 24 5 37z" fill="#43a51e"/></svg>
      <span class="w-[65px] h-[3px] bg-[#76b9ed]"></span>
    </button>
    <button aria-label="小猫" class="w-[76px] flex flex-col items-center justify-between pt-[5px]">
      <svg width="40" height="40" viewBox="0 0 40 40"><defs><clipPath id="avatar"><circle cx="20" cy="20" r="19.800"/></clipPath></defs><circle cx="20" cy="20" r="19.800" fill="#73559a"/><g clip-path="url(#avatar)"><path d="M27 32c6 0 6-7 12-9 3 4-2 11-10 12z" fill="#eccfa0"/><path d="M9 2q3-1 5 2 4-1 7 0 3-4 5-1 2 5 1 9l2 3 2-1q4-1 4 3-1 4-5 3l-3-1q0 4 1 7l2 9q-1 4-6 4l-3-4h-3l-3 4q-5 1-6-3l1-6q1-4 1-6l-4 1q-4-1-2-5 2-3 5-1l2-1Q6 12 8 7z" fill="#f9e6d4"/></g><path d="M14 11q1.500-1 3 .5M19 11.500q1.500-1.500 3-.5" stroke="#513a3e" fill="none"/><circle cx="13.500" cy="14" r="2" fill="#f7cfbf"/><circle cx="23" cy="14" r="2" fill="#f7cfbf"/><circle cx="7" cy="26" r="1.500" fill="#eda79a"/><circle cx="32" cy="17" r="1.500" fill="#eda79a"/><path d="M34 7l1 2 2 0-2 1 0 2-1-2-2 0 1-1zM3 16l1 2-2 0z" fill="#f5cf62"/></svg>
      <span class="w-[65px] h-[3px] bg-[#76b9ed] border-r-[11px] border-[#5a8fc0]"></span>
    </button>
    <button aria-label="KIS" class="w-[76px] flex flex-col items-center justify-between pt-[5px]">
      <svg width="40" height="40" viewBox="0 0 40 40"><rect width="40" height="40" rx="4" fill="#157efb"/><path d="M14 15c2-4 9-4 10 1 4-1 7 2 7 6 0 3-2 5-5 5H15" fill="none" stroke="#fff" stroke-width="2.400"/><text x="7" y="24" font-size="8" font-weight="600" font-style="italic" fill="#fff" stroke="#157efb" stroke-width="2" paint-order="stroke" font-family="Open Sans, sans-serif">KIS</text></svg>
      <span class="w-[65px] h-[3px] bg-[#76b9ed]"></span>
    </button>
    <button aria-label="Word" class="w-[76px] flex flex-col items-center justify-between pt-[7px] bg-white/20">
      <svg width="36" height="36" viewBox="0 0 36 36"><path d="M19 4h17v28H19z" fill="#2b579a"/><path d="M19 6h15v24H19z" fill="#fff"/><path d="M21 9.500h11M21 13.500h11M21 17.500h11M21 21.500h11M21 25.500h11" stroke="#2b579a" stroke-width="2"/><path d="M0 4l21-4v36L0 32z" fill="#2b579a"/><text x="2.500" y="24" font-size="16" font-weight="700" fill="#fff" font-family="Open Sans, sans-serif">W</text></svg>
      <span class="w-full h-[3px] bg-[#76b9ed]"></span>
    </button>

    <div class="ml-auto flex items-center">
      <span class="w-[30px] flex justify-center"><svg width="20" height="20" viewBox="0 0 20 20"><path d="M6 0q4 0 5 1c5 0 8 4 8 8 2 6-1 11-6 11l-4-1C4 19 1 16 1 11-1 5 1 0 6 0z" fill="#75add3"/><path d="M13.500 6.500c-1-3-7-2.500-7 .5 0 4 7.500 2 7.500 6 0 3.500-7 3.500-8 .5" fill="none" stroke="#1b639b" stroke-width="2.200"/></svg></span>
      <span class="w-[30px] flex justify-center"><svg width="18" height="17" viewBox="0 0 18 17" fill="#fff"><path d="M9 0c1 0 1.500.5 1.500 1.500C14 2 15 5 15 9l1 4h1.500v1.500H.5V13H2l1-4c0-4 1-7 4.500-7.500C7.500.5 8 0 9 0zM6.500 15h5c-1 2-4 2-5 0z"/></svg></span>
      <span class="w-[30px] flex justify-center"><svg width="20" height="20" viewBox="0 0 20 20"><circle cx="10" cy="10" r="10" fill="#3fc270"/><path d="M3.500 9.500L15 4.500l-2.500 5.500 2.500 5z" fill="#fff"/></svg></span>
      <span class="w-[30px] flex justify-center"><svg width="20" height="20" viewBox="0 0 20 20"><path d="M1 2l6 2v12l-6 3q-2-8 0-17z" fill="#ff9a1f"/><path d="M5 1q8 2 15 9-7 6-13 8z" fill="#2aa8f2"/><path d="M4 3q6 2 11 7-5 5-11 7z" fill="#79cf29"/><path d="M6 5.500l8 4.500-8 4.500z" fill="#fff"/></svg></span>
      <span class="w-[30px] flex justify-center"><svg width="20" height="20" viewBox="0 0 20 20"><path d="M10 1l9 9-9 9-9-9z" fill="#8f8f8f"/><path d="M10 1l9 9H1z" fill="#b8b8b8"/><path d="M10 4q-2 4 0 6t0 7" fill="none" stroke="#eee"/></svg></span>
      <span class="w-[30px] flex justify-center"><svg width="20" height="20" viewBox="0 0 20 20"><path d="M5 1h4v4h2V1h4l5 14-8 2-1-7H9l-1 7-8-2z" fill="#454545"/><path d="M5.500 2L2.500 12M14.500 2l3 10" stroke="#ccc" stroke-width="1.500"/><circle cx="4.500" cy="15" r="4" fill="#9bc9f5" stroke="#222"/><circle cx="15.500" cy="15" r="4" fill="#9bc9f5" stroke="#222"/></svg></span>
      <span class="w-[30px] flex justify-center"><svg width="21" height="18"><use href="#wechat"/></svg></span>
      <span class="w-[30px] flex justify-center"><svg width="20" height="20" viewBox="0 0 20 20"><path d="M.5.500h19v19H.5z" fill="#ef8b25" stroke="#fff"/><path d="M1 6h18v9H1z" fill="#d52b16"/><text x="10" y="14" text-anchor="middle" font-size="9" font-weight="700" fill="#fff" font-family="Liberation Sans, sans-serif">CC4</text></svg></span>
      <span class="w-[30px] flex justify-center"><svg width="18" height="20" viewBox="0 0 18 20"><ellipse cx="9" cy="13" rx="8" ry="6.500" fill="#111"/><circle cx="9" cy="6" r="5.500" fill="#222"/><ellipse cx="9" cy="14" rx="5" ry="5" fill="#eee"/><path d="M4 9h10v3H4zM10 0l3 2 3-2v4l-3-1-3 1z" fill="#aaa"/><circle cx="7" cy="5" r="1.300" fill="#fff"/><circle cx="11" cy="5" r="1.300" fill="#fff"/><path d="M5 8h8" stroke="#aaa" stroke-width="1.500"/><path d="M3 19h5M10 19h5" stroke="#999" stroke-width="2"/></svg></span>
      <span class="w-[30px] flex justify-center"><svg width="18" height="20" viewBox="0 0 18 20"><ellipse cx="9" cy="13" rx="8" ry="6.500" fill="#111"/><circle cx="9" cy="6" r="5.500" fill="#111"/><ellipse cx="9" cy="14" rx="5" ry="5" fill="#fff"/><path d="M3 9h12v3H8v3H5v-3H3zM10 0l3 2 3-2v5l-3-2-3 1z" fill="#f0a"/><circle cx="7" cy="5" r="1.300" fill="#fff"/><circle cx="11" cy="5" r="1.300" fill="#fff"/><path d="M5 8h8M3 19h5M10 19h5" stroke="#fdbb20" stroke-width="1.800"/></svg></span>
      <span class="w-[30px] flex justify-center"><svg width="20" height="20" viewBox="0 0 20 20"><path d="M9.500.5q4 3 9 2.500c0 8-1 13-9 16.500C2 16 .5 11 .5 3q5 .5 9-2.500z" fill="#fff" stroke="#111"/><path d="M9.500 1v18M1 9.500h17" stroke="#111"/><circle cx="14.500" cy="14.500" r="5.500" fill="#128343"/><path d="M12 14.500l2 2 3.500-4" fill="none" stroke="#fff" stroke-width="1.300"/></svg></span>
      <span class="w-[30px] flex justify-center"><svg width="20" height="20" viewBox="0 0 20 20"><circle cx="10" cy="10" r="9.500" fill="#eb4b42" stroke="#f38b84"/><path d="M14 7.500c-2-4-8.500-3-8.500 2.500s7.500 6.500 8.500 1.500V11h-4" fill="none" stroke="#fff" stroke-width="2.200"/></svg></span>
      <span class="w-[30px] flex justify-center"><svg width="20" height="20" viewBox="0 0 20 20"><rect width="20" height="20" rx="2" fill="#157efb"/><path d="M6 8c1-4 5-3 6 0 3-1 4 1 4 3s-1 3-3 3H8M4 9h5v3H5z" fill="none" stroke="#a9d0ff" stroke-width="1.400"/></svg></span>
      <span class="w-[30px] flex justify-center"><svg width="20" height="20" viewBox="0 0 20 20"><circle cx="10" cy="10" r="10" fill="#f7d51f"/><path d="M3 3a10 10 0 0 1 17 7L13 5zM0 11a10 10 0 0 0 11 9L6 14z" fill="#1fa44a"/><path d="M10 5v9M5.500 9.500h9" stroke="#1fa44a" stroke-width="2"/><circle cx="14.500" cy="14.500" r="5.500" fill="#e81f24"/><path d="M14.500 13.500v4M14.500 11v1.500" stroke="#fff"/></svg></span>
      <span class="w-[30px] flex justify-center"><svg width="20" height="20" viewBox="0 0 20 20"><path d="M3.500 2.500h8v13h-8z" fill="#ddd" stroke="#111"/><path d="M5 4h5v4H5z" fill="#333"/><path d="M1 18.500h18M11 14H3v4" fill="none" stroke="#00e" stroke-width="2"/><path d="M15 1l-3 5h3l-1 6 5-7h-3l2-4z" fill="#ffe92b"/></svg></span>
      <span class="w-[30px] flex justify-center"><svg width="20" height="20" viewBox="0 0 20 20"><path d="M2 1Q12 1 19 15q-1 3-6 2L2 7z" fill="#111" stroke="#ccc"/><path d="M4 13l3-3 5 6-3 3-5-2z" fill="#bbb" stroke="#333"/><circle cx="11" cy="10" r="2" fill="#aaa"/></svg></span>
      <span class="w-[30px] flex justify-center"><svg width="20" height="17" viewBox="0 0 20 17" fill="none" stroke="#fff"><path d="M5 1.500h14.500v11H3.500V7M.5.500h4v5h-4zM2.500 5.500v2M7 16.500h8M11 13v3"/></svg></span>
      <span class="w-[30px] flex justify-center"><svg width="20" height="18" viewBox="0 0 20 18" fill="none" stroke="#fff"><path d="M.5 6h3L7.500 2v14l-4-4h-3zM10 7q1 2 0 4"/><path d="M13 5q2.500 4 0 8" opacity=".7"/><path d="M16 2q4.500 7 0 14" opacity=".5"/></svg></span>
      <span class="w-[30px] text-center text-base leading-5">中</span>
      <span class="w-10 flex justify-center"><svg width="20" height="20" viewBox="0 0 20 20"><path d="M1 3q8-3 16-2 2 8 2 15-8 3-15 3Q1 12 1 3z" fill="#f1511f"/><path d="M14.500 6c-3-1-8-1-8 1.500 0 3 8 1 8 4.500 0 3-6 3-9 2" fill="none" stroke="#fff" stroke-width="2.600"/></svg></span>
      <time class="w-[108px] pb-0.5 text-center leading-5">11:36 周三<br>2021/7/7</time>
      <button aria-label="资讯" class="w-11 flex justify-center"><svg width="20" height="21" viewBox="0 0 20 21" fill="none" stroke="#fff" stroke-width="1.300"><path d="M4 1h15v19H2q-1 0-1-2V4h3zM4 4v14M7.500 6.500h8M7.500 10.500h8M7.500 14.500h4"/></svg></button>
      <button aria-label="通知" class="w-[63px] pt-1 flex justify-center"><svg width="32" height="32" viewBox="0 0 32 32"><path d="M1 2h20v17H11l-5 4v-4H1z" fill="#fff"/><path d="M5 7.500h12M5 11.500h12M5 15.500h8" stroke="#00308a"/><circle cx="20.500" cy="21.500" r="10" fill="#27344f" stroke="#8b95ac"/><text x="20.500" y="27" text-anchor="middle" font-size="15" font-weight="700" fill="#fff" font-family="Open Sans, sans-serif">1</text></svg></button>
      <span class="w-1.5 h-[50px] border-l border-[#6f83b5]"></span>
    </div>
  </div>

  <!-- Marcações em vermelho -->
  <svg class="absolute left-[46px] top-[80px] z-20 pointer-events-none" width="70" height="296" viewBox="46 80 70 296" fill="none" stroke="#ed1c24">
    <path d="M53.500 87.500h56v80h-56z" stroke-width="5"/>
    <path d="M75.500 174L100.500 269H88v97H63v-97H51z" stroke-width="5" stroke-linejoin="miter" stroke-miterlimit="10"/>
  </svg>

  <!-- Marca d'água -->
  <svg class="absolute right-[96px] bottom-[30px] z-20 pointer-events-none" width="354" height="180" viewBox="1470 870 354 180" fill="#f9f9f9" stroke="#c6c6c6" stroke-width="3" stroke-linejoin="round" paint-order="stroke" aria-hidden="true">
    <text x="1471" y="982" font-size="79" font-weight="700" font-family="Liberation Sans, sans-serif">Bai</text>
    <ellipse cx="1605" cy="918" rx="13" ry="17"/>
    <ellipse cx="1629" cy="893" rx="12" ry="17"/>
    <ellipse cx="1660" cy="895" rx="13" ry="16" transform="rotate(12 1660 895)"/>
    <ellipse cx="1679" cy="925" rx="13" ry="16"/>
    <path d="M1641 921c-13 0-17 12-25 20-10 9-18 17-16 28 2 12 12 17 22 15 12-2 25-2 37 0 12 2 23-3 25-15 1-11-7-19-15-27-8-8-15-21-28-21z"/>
    <text x="1611" y="974" font-size="48" font-family="Liberation Sans, sans-serif" fill="#dedede" stroke="#b4b4b4" stroke-width="2">du</text>
    <text x="1695" y="977" font-size="58" font-weight="900" font-family="Noto Sans CJK SC, sans-serif">经验</text>
    <text x="1477" y="1026" font-size="39" font-weight="500" font-family="Noto Sans, sans-serif" fill="#fff" fill-opacity=".75" stroke="#bbb" stroke-opacity=".45" stroke-width="2">jingyan.baidu.com</text>
  </svg>

</body>
</html>
